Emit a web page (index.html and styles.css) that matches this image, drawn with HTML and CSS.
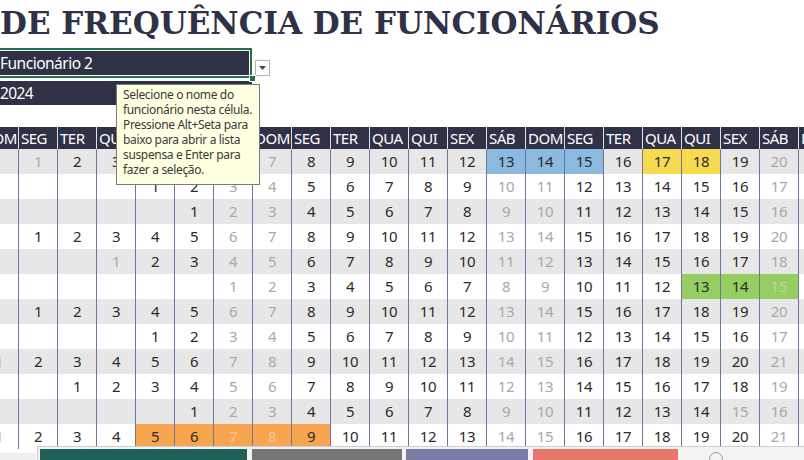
FILE: index.html
```html
<!DOCTYPE html>
<html lang="pt-BR">
<head>
<meta charset="utf-8">
<title>Controle de Frequência de Funcionários</title>
<link rel="stylesheet" href="styles.css">
</head>
<body>
<div class="sheet">
  <h1 class="title">DE FREQUÊNCIA DE FUNCIONÁRIOS</h1>
  <div class="picker">
    <div class="sel"><div class="sel-fill">Funcionário 2</div><span class="handle"></span></div>
    <div class="dd"><svg width="7" height="4" viewBox="0 0 7 4"><path d="M0 0H7L3.5 4Z" fill="#4a4a4a"/></svg></div>
  </div>
  <div class="year">2024</div>
  <div class="cal">
    <div class="hrow"><span>DOM</span><span>SEG</span><span>TER</span><span>QUA</span><span>QUI</span><span>SEX</span><span>SÁB</span><span>DOM</span><span>SEG</span><span>TER</span><span>QUA</span><span>QUI</span><span>SEX</span><span>SÁB</span><span>DOM</span><span>SEG</span><span>TER</span><span>QUA</span><span>QUI</span><span>SEX</span><span>SÁB</span><span>DOM</span></div>
    <div class="row"><span></span><span class="o">1</span><span>2</span><span>3</span><span>4</span><span>5</span><span class="o">6</span><span class="o">7</span><span>8</span><span>9</span><span>10</span><span>11</span><span>12</span><span class="b">13</span><span class="b">14</span><span class="b">15</span><span>16</span><span class="y">17</span><span class="y">18</span><span>19</span><span class="o">20</span><span class="o">21</span></div>
    <div class="row"><span></span><span></span><span></span><span></span><span>1</span><span>2</span><span class="o">3</span><span class="o">4</span><span>5</span><span>6</span><span>7</span><span>8</span><span>9</span><span class="o">10</span><span class="o">11</span><span>12</span><span>13</span><span>14</span><span>15</span><span>16</span><span class="o">17</span><span class="o">18</span></div>
    <div class="row"><span></span><span></span><span></span><span></span><span></span><span>1</span><span class="o">2</span><span class="o">3</span><span>4</span><span>5</span><span>6</span><span>7</span><span>8</span><span class="o">9</span><span class="o">10</span><span>11</span><span>12</span><span>13</span><span>14</span><span>15</span><span class="o">16</span><span class="o">17</span></div>
    <div class="row"><span></span><span>1</span><span>2</span><span>3</span><span>4</span><span>5</span><span class="o">6</span><span class="o">7</span><span>8</span><span>9</span><span>10</span><span>11</span><span>12</span><span class="o">13</span><span class="o">14</span><span>15</span><span>16</span><span>17</span><span>18</span><span>19</span><span class="o">20</span><span class="o">21</span></div>
    <div class="row"><span></span><span></span><span></span><span class="o">1</span><span>2</span><span>3</span><span class="o">4</span><span class="o">5</span><span>6</span><span>7</span><span>8</span><span>9</span><span>10</span><span class="o">11</span><span class="o">12</span><span>13</span><span>14</span><span>15</span><span>16</span><span>17</span><span class="o">18</span><span class="o">19</span></div>
    <div class="row"><span></span><span></span><span></span><span></span><span></span><span></span><span class="o">1</span><span class="o">2</span><span>3</span><span>4</span><span>5</span><span>6</span><span>7</span><span class="o">8</span><span class="o">9</span><span>10</span><span>11</span><span>12</span><span class="g">13</span><span class="g">14</span><span class="g o">15</span><span class="o">16</span></div>
    <div class="row"><span></span><span>1</span><span>2</span><span>3</span><span>4</span><span>5</span><span class="o">6</span><span class="o">7</span><span>8</span><span>9</span><span>10</span><span>11</span><span>12</span><span class="o">13</span><span class="o">14</span><span>15</span><span>16</span><span>17</span><span>18</span><span>19</span><span class="o">20</span><span class="o">21</span></div>
    <div class="row"><span></span><span></span><span></span><span></span><span>1</span><span>2</span><span class="o">3</span><span class="o">4</span><span>5</span><span>6</span><span>7</span><span>8</span><span>9</span><span class="o">10</span><span class="o">11</span><span>12</span><span>13</span><span>14</span><span>15</span><span>16</span><span class="o">17</span><span class="o">18</span></div>
    <div class="row"><span class="o">1</span><span>2</span><span>3</span><span>4</span><span>5</span><span>6</span><span class="o">7</span><span class="o">8</span><span>9</span><span>10</span><span>11</span><span>12</span><span>13</span><span class="o">14</span><span class="o">15</span><span>16</span><span>17</span><span>18</span><span>19</span><span>20</span><span class="o">21</span><span class="o">22</span></div>
    <div class="row"><span></span><span></span><span>1</span><span>2</span><span>3</span><span>4</span><span class="o">5</span><span class="o">6</span><span>7</span><span>8</span><span>9</span><span>10</span><span>11</span><span class="o">12</span><span class="o">13</span><span>14</span><span>15</span><span>16</span><span>17</span><span>18</span><span class="o">19</span><span class="o">20</span></div>
    <div class="row"><span></span><span></span><span></span><span></span><span></span><span>1</span><span class="o">2</span><span class="o">3</span><span>4</span><span>5</span><span>6</span><span>7</span><span>8</span><span class="o">9</span><span class="o">10</span><span>11</span><span>12</span><span>13</span><span>14</span><span class="o">15</span><span class="o">16</span><span class="o">17</span></div>
    <div class="row"><span class="o">1</span><span>2</span><span>3</span><span>4</span><span class="r">5</span><span class="r">6</span><span class="r o">7</span><span class="r o">8</span><span class="r">9</span><span>10</span><span>11</span><span>12</span><span>13</span><span class="o">14</span><span class="o">15</span><span>16</span><span>17</span><span>18</span><span>19</span><span>20</span><span class="o">21</span><span class="o">22</span></div>
  </div>
  <div class="tip">Selecione o nome do<br>funcionário nesta célula.<br>Pressione Alt+Seta para<br>baixo para abrir a lista<br>suspensa e Enter para<br>fazer a seleção.</div>
  <div class="strip"></div>
  <div class="panel">
    <span class="bar bar-teal"></span><span class="bar bar-gray"></span><span class="bar bar-slate"></span><span class="bar bar-salmon"></span><span class="ring"></span>
  </div>
</div>
</body>
</html>
```
FILE: styles.css
```css
html, body {
  margin: 0;
  padding: 0;
  background: #ffffff;
}

.sheet {
  position: relative;
  width: 804px;
  height: 460px;
  overflow: hidden;
  background: #ffffff;
  font-family: "Noto Sans", "Open Sans", sans-serif;
}

.title {
  margin: 0;
  height: 46px;
  line-height: 46px;
  font-family: "DejaVu Serif", serif;
  font-weight: bold;
  font-size: 31px;
  color: #2f3247;
  white-space: nowrap;
}

.picker {
  display: flex;
  align-items: flex-end;
  margin-top: 2px;
}

.sel {
  position: relative;
  box-sizing: border-box;
  width: 255px;
  height: 30px;
  margin-left: -3px;
  border: 2px solid #217346;
  padding: 1px;
  background: #ffffff;
}

.sel-fill {
  height: 100%;
  background: #2f3146;
  color: #ffffff;
  font-size: 15.5px;
  line-height: 24px;
  letter-spacing: -0.5px;
  white-space: nowrap;
}

.handle {
  position: absolute;
  right: -6px;
  bottom: -6px;
  width: 5px;
  height: 5px;
  background: #217346;
  border: 1px solid #ffffff;
}

.dd {
  box-sizing: border-box;
  width: 15px;
  height: 16px;
  margin: 0 0 2px 3px;
  border: 1px solid #b3b3b3;
  background: #ffffff;
  display: flex;
  align-items: center;
  justify-content: center;
}

.year {
  width: 252px;
  height: 24px;
  margin-top: 3px;
  background: #2f3146;
  color: #ffffff;
  font-size: 15.5px;
  line-height: 24px;
  letter-spacing: -0.6px;
}

.cal {
  margin-top: 22px;
  margin-left: -21px;
}

.hrow,
.row {
  display: grid;
  grid-template-columns: repeat(22, 39px);
}

.hrow {
  height: 22px;
  background: #2f3146;
  color: #ffffff;
}

.hrow span {
  border-left: 1px solid rgba(255, 255, 255, 0.85);
  padding: 1px 0 0 2px;
  font-size: 15px;
  line-height: 21px;
  letter-spacing: -0.5px;
  white-space: nowrap;
  overflow: hidden;
}

.row {
  height: 25px;
}

.row:nth-child(even) {
  background: #e7e7e7;
}

.row span {
  border-left: 1px solid #74749a;
  text-align: center;
  font-size: 15px;
  line-height: 25px;
  letter-spacing: -0.4px;
  color: #2b2b2b;
}

.row span.o {
  color: #a9a9a9;
}

.row span.b {
  background: #8cb9e0;
}

.row span.y {
  background: #f6da50;
}

.row span.g {
  background: #95cf62;
}

.row span.g.o {
  color: #bcd9a4;
}

.row span.r {
  background: #f7a64f;
}

.row span.r.o {
  color: #f2c99a;
}

.tip {
  position: absolute;
  left: 116px;
  top: 84px;
  box-sizing: border-box;
  width: 144px;
  height: 101px;
  border: 1px solid #7a7a7a;
  background: #ffffe1;
  padding: 2px 0 0 6px;
  font-size: 12px;
  line-height: 15px;
  letter-spacing: -0.35px;
  color: #3a3a3a;
  white-space: nowrap;
}

.strip {
  position: absolute;
  left: 0;
  top: 453px;
  width: 36px;
  bottom: 0;
  background: #efefef;
}

.panel {
  position: absolute;
  left: 37px;
  top: 446px;
  right: 0;
  bottom: 0;
  box-sizing: border-box;
  border-top: 1px solid #cfcfcf;
  border-left: 1px solid #cfcfcf;
  background: #f3f3f3;
  display: flex;
  align-items: flex-start;
  padding: 2px 0 0 2px;
}

.bar {
  height: 14px;
}

.bar-teal {
  width: 207px;
  background: #1f5f58;
}

.bar-gray {
  width: 150px;
  margin-left: 5px;
  background: #767676;
}

.bar-slate {
  width: 122px;
  margin-left: 4px;
  background: #7a7da6;
}

.bar-salmon {
  width: 145px;
  margin-left: 5px;
  background: #e8776a;
}

.ring {
  width: 12px;
  height: 12px;
  margin: 3px 0 0 31px;
  border: 1.5px solid #a0a0a0;
  border-radius: 50%;
}
```
